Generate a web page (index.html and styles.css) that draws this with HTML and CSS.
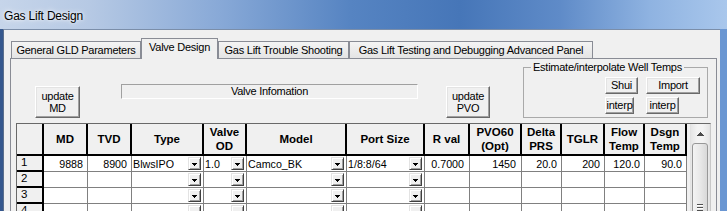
FILE: index.html
```html
<!DOCTYPE html>
<html>
<head>
<meta charset="utf-8">
<title>Gas Lift Design</title>
<link rel="stylesheet" href="styles.css">
</head>
<body>
<div class="window">
  <div class="titlebar">Gas Lift Design</div>
  <div class="frame">
    <div class="client">
      <div class="tabs">
        <div class="tab tab-gen">General GLD Parameters</div>
        <div class="tab tab-valve active">Valve Design</div>
        <div class="tab tab-trouble">Gas Lift Trouble Shooting</div>
        <div class="tab tab-test">Gas Lift Testing and Debugging Advanced Panel</div>
      </div>
      <div class="panel">
        <div class="toolbar">
          <div class="btn btn-tall btn-md">update<br>MD</div>
          <div class="info">Valve Infomation</div>
          <div class="btn btn-tall btn-pvo">update<br>PVO</div>
          <fieldset class="temps">
            <legend>Estimate/interpolate Well Temps</legend>
            <div class="temps-grid">
              <div class="btn btn-small w-shui">Shui</div>
              <div class="btn btn-small w-import">Import</div>
              <div class="btn btn-small w-interp1">interp</div>
              <div class="btn btn-small w-interp2">interp</div>
            </div>
          </fieldset>
        </div>
        <div class="grid">
          <div class="cells">
            <div class="h"></div>
            <div class="h">MD</div>
            <div class="h">TVD</div>
            <div class="h">Type</div>
            <div class="h">Valve<br>OD</div>
            <div class="h">Model</div>
            <div class="h">Port Size</div>
            <div class="h">R val</div>
            <div class="h">PVO60<br>(Opt)</div>
            <div class="h">Delta<br>PRS</div>
            <div class="h">TGLR</div>
            <div class="h">Flow<br>Temp</div>
            <div class="h">Dsgn<br>Temp</div>

            <div class="rn">1</div>
            <div class="d num">9888</div>
            <div class="d num">8900</div>
            <div class="d dd"><span>BlwsIPO</span><span class="ddbtn"></span></div>
            <div class="d dd"><span>1.0</span><span class="ddbtn"></span></div>
            <div class="d dd"><span>Camco_BK</span><span class="ddbtn"></span></div>
            <div class="d dd"><span>1/8:8/64</span><span class="ddbtn"></span></div>
            <div class="d num wide">0.7000</div>
            <div class="d num wide">1450</div>
            <div class="d num">20.0</div>
            <div class="d num">200</div>
            <div class="d num">120.0</div>
            <div class="d num">90.0</div>

            <div class="rn">2</div>
            <div class="d"></div>
            <div class="d"></div>
            <div class="d dd"><span></span><span class="ddbtn"></span></div>
            <div class="d dd"><span></span><span class="ddbtn"></span></div>
            <div class="d dd"><span></span><span class="ddbtn"></span></div>
            <div class="d dd"><span></span><span class="ddbtn"></span></div>
            <div class="d"></div>
            <div class="d"></div>
            <div class="d"></div>
            <div class="d"></div>
            <div class="d"></div>
            <div class="d"></div>

            <div class="rn">3</div>
            <div class="d"></div>
            <div class="d"></div>
            <div class="d dd"><span></span><span class="ddbtn"></span></div>
            <div class="d dd"><span></span><span class="ddbtn"></span></div>
            <div class="d dd"><span></span><span class="ddbtn"></span></div>
            <div class="d dd"><span></span><span class="ddbtn"></span></div>
            <div class="d"></div>
            <div class="d"></div>
            <div class="d"></div>
            <div class="d"></div>
            <div class="d"></div>
            <div class="d"></div>

            <div class="rn">4</div>
            <div class="d"></div>
            <div class="d"></div>
            <div class="d dd"><span></span><span class="ddbtn"></span></div>
            <div class="d dd"><span></span><span class="ddbtn"></span></div>
            <div class="d dd"><span></span><span class="ddbtn"></span></div>
            <div class="d dd"><span></span><span class="ddbtn"></span></div>
            <div class="d"></div>
            <div class="d"></div>
            <div class="d"></div>
            <div class="d"></div>
            <div class="d"></div>
            <div class="d"></div>
          </div>
          <div class="vscroll">
            <div class="track">
              <div class="sb-up"><span class="up-arrow"></span></div>
              <div class="thumb"><span class="grip"></span></div>
            </div>
          </div>
        </div>
      </div>
    </div>
  </div>
</div>
</body>
</html>
```
FILE: styles.css
```css
html, body {
  margin: 0;
  padding: 0;
}
body {
  width: 727px;
  height: 211px;
  overflow: hidden;
  font-family: "Liberation Sans", Arial, sans-serif;
  font-size: 11px;
  color: #000;
  background: #6e9ad6;
}
.window {
  width: 727px;
  height: 211px;
  display: flex;
  flex-direction: column;
}
.titlebar {
  flex: none;
  box-sizing: border-box;
  height: 29px;
  padding: 9px 0 0 4px;
  line-height: 15px;
  font-size: 12px;
  letter-spacing: -0.2px;
  color: #000;
  text-shadow: 0 0 6px #fff, 0 0 3px rgba(255,255,255,0.8);
  background: linear-gradient(90deg, #c6d5ea 0, #b6c9e4 90px, #88a9d7 220px, #5684c2 350px, #4676b8 460px, #5f8bc8 560px, #8fb3e1 650px, #a9c7ec 727px);
}
.frame {
  flex: 1;
  display: flex;
  min-height: 0;
  background: linear-gradient(90deg, #36588e 0, #36588e 3px, #6e9ad6 3px, #6a96d2 100%);
}
.client {
  box-sizing: border-box;
  width: 717px;
  margin-left: 3px;
  border-left: 1px solid #5b6f8c;
  border-top: 1px solid #7b8ea9;
  background: #f0f0f0;
  padding: 8px 0 0 6px;
  display: flex;
  flex-direction: column;
}

/* tabs */
.tabs {
  display: flex;
  align-items: flex-end;
  height: 21px;
  margin-left: 1px;
  margin-bottom: -1px;
  position: relative;
  z-index: 1;
  flex: none;
}
.tab {
  box-sizing: border-box;
  height: 18px;
  border: 1px solid #898c95;
  text-align: center;
  line-height: 16px;
  white-space: nowrap;
  letter-spacing: -0.25px;
  background: linear-gradient(#f4f4f4, #e4e4e4);
}
.tab.active {
  height: 21px;
  border-bottom: none;
  padding-bottom: 4px;
  background: #f0f0f0;
}
.tab-gen { width: 130px; }
.tab-valve { width: 77px; }
.tab-trouble { width: 131px; }
.tab-test { width: 244px; }

.panel {
  box-sizing: border-box;
  width: 707px;
  flex: 1;
  min-height: 0;
  border: 1px solid #898c95;
  border-bottom: none;
  background: #f0f0f0;
  padding: 2px 0 0 5px;
  display: flex;
  flex-direction: column;
}

/* toolbar */
.toolbar {
  flex: none;
  display: flex;
  align-items: flex-start;
  height: 57px;
}
.btn {
  box-sizing: border-box;
  border: 1px solid;
  border-color: #fff #696969 #696969 #fff;
  box-shadow: inset -1px -1px 0 #a0a0a0, inset 1px 1px 0 #e3e3e3;
  background: #f0f0f0;
  display: flex;
  align-items: center;
  justify-content: center;
  text-align: center;
  letter-spacing: -0.25px;
  white-space: nowrap;
}
.btn-tall {
  width: 45px;
  height: 32px;
  margin-top: 25px;
  line-height: 12px;
}
.btn-md { margin-left: 19px; }
.btn-pvo { width: 44px; margin-left: 28px; }
.info {
  box-sizing: border-box;
  width: 297px;
  height: 15px;
  margin: 23px 0 0 41px;
  border: 1px solid;
  border-color: #a0a0a0 #fff #fff #a0a0a0;
  text-align: center;
  line-height: 13px;
  letter-spacing: -0.25px;
}
.temps {
  box-sizing: border-box;
  width: 185px;
  height: 57px;
  margin: 0 0 0 33px;
  padding: 0;
  border: 1px solid #a9a9a9;
  min-inline-size: 0;
}
.temps legend {
  margin-left: 7px;
  padding: 0 2px;
  line-height: 13px;
  font-size: 11px;
  letter-spacing: -0.25px;
}
.temps-grid {
  display: grid;
  grid-template-columns: 41px auto;
  row-gap: 3px;
  justify-items: start;
  margin: 3px 0 0 81px;
}
.btn-small {
  height: 17px;
  line-height: 15px;
}
.w-shui { width: 33px; }
.w-import { width: 54px; }
.w-interp1 { width: 29px; }
.w-interp2 { width: 33px; }

/* grid */
.grid {
  flex: 1;
  min-height: 0;
  display: flex;
  box-sizing: border-box;
  width: 695px;
  margin-top: 5px;
  border-top: 1px solid #696969;
  border-left: 1px solid #696969;
  border-right: 1px solid #c8c8c8;
}
.cells {
  align-self: flex-start;
  display: grid;
  grid-template-columns: 27px 44px 44px 72px 43px 100px 78px 45px 52px 40px 43px 40px 42px;
  grid-template-rows: 32px repeat(4, 16px);
  background: #fff;
  font-size: 10.7px;
}
.cells > div {
  box-sizing: border-box;
  overflow: hidden;
  white-space: nowrap;
}
.h {
  background: #f0f0f0;
  border-right: 2px solid #000;
  border-bottom: 2px solid #000;
  font-weight: bold;
  font-size: 11.5px;
  line-height: 14px;
  display: flex;
  align-items: center;
  justify-content: center;
  text-align: center;
}
.rn {
  background: #f0f0f0;
  border-right: 2px solid #000;
  border-bottom: 2px solid #000;
  padding-left: 4px;
  font-size: 11.5px;
  line-height: 13px;
}
.d {
  border-right: 1px solid #808080;
  border-bottom: 1px solid #808080;
  padding-top: 1px;
  line-height: 14px;
}
.num {
  text-align: right;
  padding-right: 4px;
}
.num.wide { padding-right: 5px; }
.dd {
  display: flex;
  align-items: center;
  justify-content: space-between;
  padding-top: 0;
  padding-left: 1px;
}
.ddbtn {
  flex: none;
  box-sizing: border-box;
  width: 13px;
  height: 13px;
  margin-right: 2px;
  border: 1px solid;
  border-color: #e3e3e3 #404040 #404040 #e3e3e3;
  box-shadow: inset 1px 1px 0 #fff, inset -1px -1px 0 #a0a0a0;
  background: #f0f0f0;
  display: flex;
  align-items: center;
  justify-content: center;
}
.ddbtn::after {
  content: "";
  display: block;
  width: 5px;
  height: 3px;
  margin-top: 1px;
  background:
    linear-gradient(#000, #000) 0 0 / 5px 1px no-repeat,
    linear-gradient(#000, #000) 1px 1px / 3px 1px no-repeat,
    linear-gradient(#000, #000) 2px 2px / 1px 1px no-repeat;
}

/* scrollbar */
.vscroll {
  flex: none;
  box-sizing: border-box;
  width: 23px;
  padding-left: 3px;
  background: #f0f0f0;
}
.track {
  box-sizing: border-box;
  width: 20px;
  height: 100%;
  border-left: 1px solid #e2e2e2;
  border-right: 1px solid #e2e2e2;
  background: linear-gradient(90deg, #e6e6e6, #f3f3f3 35%, #f3f3f3 65%, #e6e6e6);
  display: flex;
  flex-direction: column;
  align-items: center;
}
.sb-up {
  flex: none;
  width: 100%;
  height: 19px;
  display: flex;
  align-items: center;
  justify-content: center;
}
.up-arrow {
  display: block;
  width: 7px;
  height: 4px;
  background:
    linear-gradient(#4a4a4a, #4a4a4a) 3px 0 / 1px 1px no-repeat,
    linear-gradient(#4a4a4a, #4a4a4a) 2px 1px / 3px 1px no-repeat,
    linear-gradient(#4a4a4a, #4a4a4a) 1px 2px / 5px 1px no-repeat,
    linear-gradient(#4a4a4a, #4a4a4a) 0 3px / 7px 1px no-repeat;
}
.thumb {
  flex: none;
  box-sizing: border-box;
  width: 16px;
  height: 125px;
  border: 1px solid #979797;
  border-radius: 3px;
  background: linear-gradient(90deg, #f3f3f3, #e8e8e8 50%, #d8d8d8);
  display: flex;
  justify-content: center;
  padding-top: 60px;
}
.grip {
  display: block;
  width: 6px;
  height: 9px;
  background: repeating-linear-gradient(180deg, #505050 0, #505050 1px, #ffffff 1px, #ffffff 2px, transparent 2px, transparent 3px);
}
```
